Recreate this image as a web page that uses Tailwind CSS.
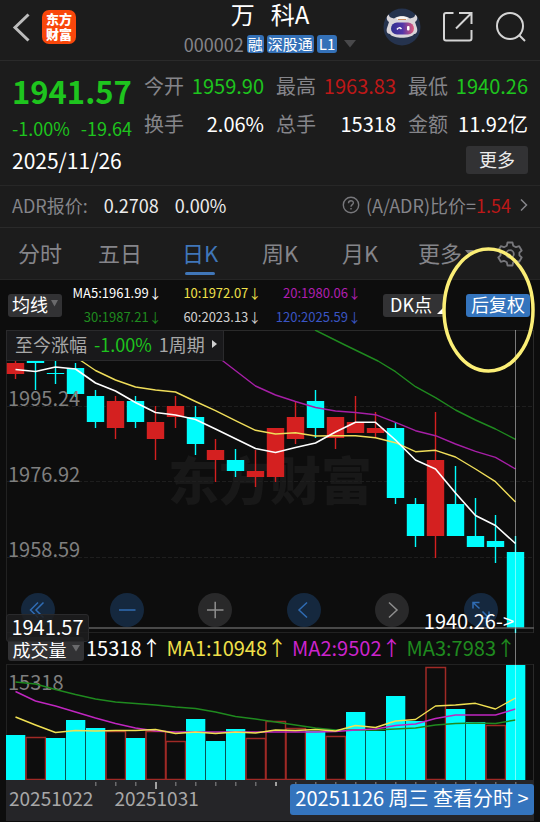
<!DOCTYPE html>
<html lang="zh-CN">
<head>
<meta charset="utf-8">
<meta name="viewport" content="width=device-width, initial-scale=1">
<title>万科A 000002 日K</title>
<script src="https://cdn.jsdelivr.net/npm/@tailwindcss/browser@4"></script>
</head>
<body class="relative bg-[#0d0d0d] font-['Noto_Sans_CJK_SC',sans-serif] text-white overflow-x-hidden">

<header class="grid grid-cols-[1fr_auto_1fr] h-[61px] bg-[#1c1c1c] border-b border-[#2a2a2a]">
  <div class="flex items-start gap-3 pl-3 pt-[10px]">
    <button aria-label="返回" class="h-[34px]">
      <svg width="18" height="32" viewBox="0 0 18 32" fill="none" stroke="#bcbcbc" stroke-width="3"><path d="M16.500 3.500L3 16.500L16.500 29.500"/></svg>
    </button>
    <div class="w-[34px] h-[34px] rounded-[7px] bg-[#f9470b] text-[13px] leading-[15px] font-black text-center pt-px">东方<br>财富</div>
  </div>
  <div class="flex flex-col items-center">
    <h1 class="text-2xl leading-[28px] whitespace-pre">万   科A</h1>
    <div class="flex items-center gap-[3px] h-[18px] mt-[7px] text-[15px] leading-[18px]">
      <span class="text-lg leading-[18px] text-[#85858a]">000002</span>
      <span class="bg-[#3471b8] rounded-[3px] px-px">融</span>
      <span class="bg-[#3471b8] rounded-[3px] px-px">深股通</span>
      <span class="bg-[#3471b8] rounded-[3px] px-0.5">L1</span>
      <svg class="ml-1" width="12" height="8" viewBox="0 0 12 8"><path d="M0 0H12L6 7.500Z" fill="#48484a"/></svg>
    </div>
  </div>
  <div class="flex items-start justify-end gap-[21px] pr-[13px] pt-2">
    <button aria-label="智能助手">
      <svg width="38" height="38" viewBox="0 0 38 38">
        <defs><linearGradient id="visor" x1="0" x2="1"><stop offset="0" stop-color="#31318f"/><stop offset=".5" stop-color="#5336a8"/><stop offset="1" stop-color="#e05a7c"/></linearGradient></defs>
        <circle cx="19" cy="19" r="18.500" fill="#25334e"/>
        <path d="M6 14C3 12 3 8 6 6.500C6 10 9 9.500 11 10.500C15 7.500 23 7.500 27 10.500C29 9.500 32 10 32 6.500C35 8 35 12 32 14L34 20C35 24 33 26 31 26C28 31 10 31 7 26C4 26 3 23 4 20Z" fill="#d9d5d9"/>
        <path d="M13 10C16 7.500 22 7.500 25 10L23 12H15Z" fill="#f7f5f3"/><path d="M15 11.500H23" stroke="#c88b63" stroke-width="1"/>
        <rect x="8" y="14.500" width="23" height="12" rx="6" fill="url(#visor)"/>
        <path d="M14 21.500Q16 18.500 18.500 21" stroke="#fff" stroke-width="1.500" fill="none"/><rect x="24" y="18" width="2.500" height="4.500" rx="1" fill="#fff"/>
      </svg>
    </button>
    <button aria-label="分享" class="pt-[3px]">
      <svg width="32" height="32" viewBox="0 0 32 32" fill="none" stroke="#d4d4d4" stroke-width="2"><path d="M11.500 2H4Q2 2 2 4V27.500Q2 29.500 4 29.500H27.500Q29.500 29.500 29.500 27.500V19M17 2H29.500V13M29.500 2L14 17.500"/></svg>
    </button>
    <button aria-label="搜索" class="pt-[3px]">
      <svg width="32" height="32" viewBox="0 0 32 32" fill="none" stroke="#d4d4d4" stroke-width="2"><circle cx="15" cy="15" r="13"/><path d="M24.500 24.500L30 30"/></svg>
    </button>
  </div>
</header>

<section class="h-[125px] bg-[#1c1c1c] border-b border-[#272727] px-3 pt-[11px]">
  <div class="flex gap-3">
    <div class="w-[120px] shrink-0">
      <div class="text-[31px] leading-[38px] font-bold text-[#1ec41e]">1941.57</div>
      <div class="flex justify-between text-lg leading-[36px] text-[#1ec41e]"><span>-1.00%</span><span>-19.64</span></div>
    </div>
    <dl class="grid grid-cols-3 content-start gap-x-3 gap-y-[10px] flex-1 text-xl leading-[28px]">
      <div class="flex justify-between"><dt class="text-[#85858a]">今开</dt><dd class="text-[#1ec41e]">1959.90</dd></div>
      <div class="flex justify-between"><dt class="text-[#85858a]">最高</dt><dd class="text-[#bd1818]">1963.83</dd></div>
      <div class="flex justify-between"><dt class="text-[#85858a]">最低</dt><dd class="text-[#1ec41e]">1940.26</dd></div>
      <div class="flex justify-between"><dt class="text-[#85858a]">换手</dt><dd>2.06%</dd></div>
      <div class="flex justify-between"><dt class="text-[#85858a]">总手</dt><dd>15318</dd></div>
      <div class="flex justify-between"><dt class="text-[#85858a]">金额</dt><dd>11.92亿</dd></div>
    </dl>
  </div>
  <div class="flex justify-between items-center h-[28px]">
    <time class="text-[21px] leading-[28px]">2025/11/26</time>
    <button class="w-[62px] h-[28px] rounded-[3px] bg-[#323234] pb-[2px] text-lg leading-[26px] text-[#ececec]">更多</button>
  </div>
</section>

<a href="#adr" class="flex items-center h-[42px] bg-[#1c1c1c] border-b border-[#2a2a2a] px-3 pb-[3px] text-lg leading-6">
  <span class="text-[#85858a]">ADR报价:</span>
  <span class="ml-4 text-[#ececec]">0.2708</span>
  <span class="ml-4 text-[#ececec]">0.00%</span>
  <svg class="ml-auto mr-[6px]" width="18" height="18" viewBox="0 0 18 18" fill="none" stroke="#77777b" stroke-width="1.400"><circle cx="9" cy="9" r="7.700"/><path d="M6.500 7.200C6.500 3.800 11.500 4 11.400 7C11.300 8.700 9 8.700 9 10.800M9 12V13.500"/></svg>
  <span class="text-[#85858a]">(A/ADR)比价=</span><span class="text-[#bd1818]">1.54</span>
  <svg class="ml-[9px]" width="8" height="14" viewBox="0 0 8 14" fill="none" stroke="#85858a" stroke-width="1.500"><path d="M1 1.500L6.500 7L1 12.500"/></svg>
</a>

<nav class="grid grid-cols-[repeat(6,1fr)_60px] h-[52px] bg-[#1c1c1c] border-b border-[#252525] text-[22px] leading-[48px] text-[#85858a]">
  <button class="pb-[3px]">分时</button>
  <button class="pb-[3px]">五日</button>
  <button class="flex flex-col items-center text-[#4076b8]"><span class="h-[44px]">日K</span><span class="w-[30px] h-[3px] rounded-sm bg-[#4076b8]"></span></button>
  <button class="pb-[3px]">周K</button>
  <button class="pb-[3px]">月K</button>
  <button class="relative pb-[3px]">更多<svg class="absolute right-[6px] top-[22px]" width="9" height="6" viewBox="0 0 9 6"><path d="M0 0H9L4.500 5.500Z" fill="#77777b"/></svg></button>
  <button aria-label="设置" class="flex items-center justify-center">
    <svg width="26" height="26" viewBox="0 0 26 26" fill="none" stroke="#77777b" stroke-width="1.800" stroke-linejoin="round"><path d="M10.500 1.500H15.500L16.200 4.700L19 6.200L22.200 5.200L24.700 9.500L22.400 11.700V14.300L24.700 16.500L22.200 20.800L19 19.800L16.200 21.300L15.500 24.500H10.500L9.800 21.300L7 19.800L3.800 20.800L1.300 16.500L3.600 14.300V11.700L1.300 9.500L3.800 5.200L7 6.200L9.800 4.700Z"/><circle cx="13" cy="13" r="3.800"/></svg>
  </button>
</nav>

<div class="flex items-center h-[50px] pl-2 pr-[10px] text-lg leading-5">
  <button class="flex items-center justify-center gap-[3px] w-[54px] h-[23px] pb-[3px] rounded-[3px] bg-[#323234]">均线<svg width="7" height="7" viewBox="0 0 7 7"><path d="M0 0H7L3.500 6.500Z" fill="#6a6a6c"/></svg></button>
  <div class="grid grid-cols-3 flex-1 text-right text-[13px] leading-6 mr-[22px] whitespace-nowrap">
    <span>MA5:1961.99↓</span><span class="text-[#f0e04a]">10:1972.07↓</span><span class="text-[#b01fb0]">20:1980.06↓</span>
    <span class="text-[#1f8a1f]">30:1987.21↓</span><span class="text-[#d0d0d0]">60:2023.13↓</span><span class="text-[#3a55c4]">120:2025.59↓</span>
  </div>
  <button class="relative w-[62px] h-[23px] pl-[7px] pb-[3px] rounded-[3px] bg-[#323234] text-left">DK点<svg class="absolute right-0 bottom-[3px]" width="8" height="8" viewBox="0 0 8 8"><path d="M8 0V8H0Z" fill="#fff"/></svg></button>
  <button class="ml-[21px] w-16 h-[23px] pb-[3px] rounded-[3px] bg-[#3474bd] whitespace-nowrap">后复权</button>
</div>

<main class="relative">
  <section class="relative h-[303px]">
    <div class="absolute inset-x-0 top-[118px] text-center text-[51px] leading-[60px] font-black text-[#181818]">东方财富</div>
    <svg id="price" class="relative block w-full h-full" viewBox="0 330 540 303" preserveAspectRatio="none" fill="none"></svg>
    <span class="absolute left-2 top-[56px] text-xl leading-6 text-[#7f7f7f]">1995.24</span>
    <span class="absolute left-2 top-[132px] text-xl leading-6 text-[#7f7f7f]">1976.92</span>
    <span class="absolute left-2 top-[207px] text-xl leading-6 text-[#7f7f7f]">1958.59</span>
    <div class="absolute left-[6px] top-0 flex items-center gap-[7px] h-[31px] w-[218px] pl-2 pb-[3px] bg-[#19191b] border border-[#2a2a2c] text-lg leading-6 text-[#a8a8a8] whitespace-nowrap">
      <span>至今涨幅</span><span class="text-[#1ec41e]">-1.00%</span><span>1周期</span>
      <svg width="5" height="8" viewBox="0 0 5 8"><path d="M0 0L5 4L0 8Z" fill="#d0d0d0"/></svg>
    </div>
    <div class="absolute left-[21px] right-[42px] top-[263px] flex justify-between">
      <button aria-label="最早" class="w-[34px] h-[34px] rounded-full bg-[#15283e]"><svg viewBox="0 0 34 34" fill="none" stroke="#306cb4" stroke-width="1.500"><path d="M17 9.500L9.500 17L17 24.500M22.500 9.500L15 17L22.500 24.500"/></svg></button>
      <button aria-label="缩小" class="w-[34px] h-[34px] rounded-full bg-[#15283e]"><svg viewBox="0 0 34 34" fill="none" stroke="#306cb4" stroke-width="1.500"><path d="M9 17H25.500"/></svg></button>
      <button aria-label="放大" class="w-[34px] h-[34px] rounded-full bg-[#29292a]"><svg viewBox="0 0 34 34" fill="none" stroke="#8e8e8e" stroke-width="1.500"><path d="M9 17H25.500M17.200 8.700V25.300"/></svg></button>
      <button aria-label="前移" class="w-[34px] h-[34px] rounded-full bg-[#15283e]"><svg viewBox="0 0 34 34" fill="none" stroke="#306cb4" stroke-width="1.500"><path d="M20 9.500L12 17L20 24.500"/></svg></button>
      <button aria-label="后移" class="w-[34px] h-[34px] rounded-full bg-[#29292a]"><svg viewBox="0 0 34 34" fill="none" stroke="#8e8e8e" stroke-width="1.500"><path d="M14 9.500L22 17L14 24.500"/></svg></button>
      <button aria-label="全屏" class="w-[34px] h-[34px] rounded-full bg-[#15283e]"><svg viewBox="0 0 34 34" fill="none" stroke="#306cb4" stroke-width="1.500"><path d="M9 15.500V9.500H15.500M9 9.500L15.500 15.500M25 18.500V25H18.500M25 25L18.500 18.500"/></svg></button>
    </div>
    <span class="absolute right-[26px] top-[279px] text-xl leading-6">1940.26-&gt;</span>
    <span class="absolute z-10 left-[6px] top-[284px] w-[83px] h-[28px] rounded-[3px] bg-[#1e1e20]/85 border border-[#2a2a2c] text-xl leading-[24px] text-center">1941.57</span>
  </section>

  <div class="flex items-center h-[31px] pl-2 text-xl leading-6 whitespace-nowrap">
    <button class="flex items-center justify-center gap-[5px] w-[76px] h-6 rounded-[3px] bg-[#323234] text-lg leading-6">成交量<svg width="8" height="7" viewBox="0 0 8 7"><path d="M0 0H8L4 6.500Z" fill="#6a6a6c"/></svg></button>
    <div class="flex gap-[5px] pl-[2px] pb-[2px]">
      <span>15318↑</span>
      <span class="text-[#f0e04a]">MA1:10948↑</span>
      <span class="text-[#cc24cc]">MA2:9502↑</span>
      <span class="text-[#1f8a1f]">MA3:7983↑</span>
    </div>
  </div>

  <section class="relative h-[116px]">
    <span class="absolute left-2 top-[6px] text-xl leading-6 text-[#7f7f7f]">15318</span>
    <svg id="volume" class="relative block w-full h-full" viewBox="0 664 540 116" preserveAspectRatio="none" fill="none"></svg>
  </section>

  <footer class="relative h-[41px] mx-[6px] bg-[#252528]">
    <svg id="ticks" class="block w-full h-[10px]" viewBox="6 780 528 10" preserveAspectRatio="none"></svg>
    <div class="absolute left-[3px] top-[6px] flex gap-[21px] text-[19px] leading-6 text-[#a8a8a8]"><span>20251022</span><span>20251031</span></div>
    <button class="absolute right-0 top-1 w-[244px] h-[31px] pb-[3px] rounded-[3px] bg-[#3474bd] text-xl leading-[28px] whitespace-nowrap">20251126 周三 查看分时 &gt;</button>
  </footer>

  <div class="absolute top-0 h-[450px] right-[4.537%] w-px bg-white/45 pointer-events-none"></div>
</main>

<svg class="absolute right-[5px] top-[247px] pointer-events-none" width="93" height="126" viewBox="0 0 93 126" fill="none" stroke="#fbee76" stroke-width="3.500"><ellipse cx="46.500" cy="63" rx="44.500" ry="61"/></svg>

<script>
const NS = 'http://www.w3.org/2000/svg';
const CYAN = '#00fdfd', RED = '#d42020';
function add(id, tag, attrs) {
  const el = document.createElementNS(NS, tag);
  for (const k in attrs) el.setAttribute(k, attrs[k]);
  document.getElementById(id).appendChild(el);
}
const cx = i => 15.5 + i * 20;
function series(id, color, ys, start, width, lead) {
  let pts = lead ? [lead] : [];
  ys.forEach((y, i) => pts.push([cx(start + i), y]));
  add(id, 'polyline', { points: pts.join(' '), stroke: color, 'stroke-width': width, 'stroke-linejoin': 'round' });
}
function line(id, x1, y1, x2, y2, stroke, w, dash) {
  const a = { x1, y1, x2, y2, stroke, 'stroke-width': w };
  if (dash) a['stroke-dasharray'] = dash;
  add(id, 'line', a);
}

[406.5, 481.5, 557.5].forEach(y => line('price', 6, y, 533, y, '#1e1e1e', 1, '4 2'));
line('price', 6, 330.5, 534, 330.5, '#2a2a2a', 1);
line('price', 6, 632.5, 534, 632.5, '#222222', 1);
line('price', 6.5, 330, 6.5, 633, '#222222', 1);
line('price', 533.5, 330, 533.5, 633, '#2a2a2a', 1);

/* direction, high, body top, body bottom, low */
const candles = [
  [1,360,363,374,379],[0,360,360,363,390],[0,360,373,374,384],[0,363,368,394,397],[0,390,396,422,428],
  [1,396,401,428,439],[0,396,401,422,428],[1,406,422,439,460],[1,396,406,417,428],[0,406,417,444,455],
  [1,439,450,460,482],[0,449,460,471,477],[1,450,471,477,487],[1,428,428,477,482],[1,402,417,439,444],
  [0,390,401,428,438],[1,417,417,438,449],[1,396,422,433,433],[1,412,428,433,437],[0,422,428,498,504],
  [0,498,504,536,547],[1,412,460,536,558],[0,466,504,536,536],[0,498,536,547,547],[0,515,541,547,563],
  [0,536,552,628,633]];
candles.forEach(([up, hi, top, bot, lo], i) => {
  const c = up ? RED : CYAN;
  line('price', cx(i), hi, cx(i), lo, c, 1.4);
  add('price', 'rect', { x: cx(i) - 8.7, y: top, width: 17.4, height: bot - top, fill: c });
});
series('price', '#1f8a1f', [371.7,386.7,397.7,410,420,429,439.3], 19, 1.4, [[315,330],[345,345],[378,361]]);
series('price', '#a61fa6', [386,395,401.5,407.5,411,412.5,414.7,422.3,430.7,435.7,444,451.3,457.3,469], 12, 1.4, [221.7,360]);
series('price', '#f0de5a', [370.5,380,387,390,392,401.5,410.7,420.7,430.3,434,432.7,436,435.7,435.7,437.7,442.7,451.7,450.3,457,469,481.7,502], 4, 1.4, [80,360]);
series('price', '#ffffff', [369.5,371.5,367,369,383,391,402.5,412.5,415,419.5,429,438.7,448.5,452.5,447.5,443,432,422.3,422.3,440,460,469,493,515.5,525.5,543.5], 0, 1.6);
line('price', 89, 628, 534, 628, '#5e5e5e', 1.5);

line('volume', 6, 664.5, 534, 664.5, '#222222', 1);
line('volume', 6.5, 664, 6.5, 780, '#222222', 1);
line('volume', 533.5, 664, 533.5, 780, '#2a2a2a', 1);
/* direction, top edge */
const bars = [[0,735],[1,737],[0,738],[0,720],[0,728],[1,731],[0,738],[1,731],[1,741],[0,719],[0,741],[0,729],[1,738],
  [1,721],[1,728],[0,731],[1,736],[0,712],[0,731],[0,696],[0,721],[1,667],[0,709],[0,722],[1,725],[0,665]];
bars.forEach(([up, top], i) => {
  if (up) add('volume', 'rect', { x: cx(i) - 9.5, y: top + .5, width: 19.5, height: 779 - top, stroke: '#a02a26', 'stroke-width': 1.5 });
  else add('volume', 'rect', { x: cx(i) - 9.5, y: top, width: 19.3, height: 780 - top, fill: CYAN });
});
series('volume', '#1f8a1f', [682,684,689.5,694.5,699,702,703.5,705,707,708.5,712,716.5,719,722,725,728,730,730,730,729,728,725,723.5,723,723.5,720], 0, 1.4);
series('volume', '#c026c0', [691.5,701,706,712,718,723.5,728,731,732,732,732,732,732,732,732,732,731.5,730,729,725.5,724,718.5,715,715,715,709], 0, 1.4);
series('volume', '#f0e052', [717,725,732.5,730.5,731,730.5,730.5,729.5,733.5,732,733.5,732,733,730,730.5,729.5,731,725.5,727.5,721,719.5,706,705,703.3,709,698], 0, 1.4);

for (let i = 4; i < 26; i++) {
  const major = i === 7 || i === 13;
  add('ticks', 'rect', { x: cx(i) - .5, y: 782, width: major ? 2 : 1.5, height: i === 7 ? 7 : 4, fill: major ? '#a0a0a0' : '#6a6a6c' });
}
</script>
</body>
</html>
